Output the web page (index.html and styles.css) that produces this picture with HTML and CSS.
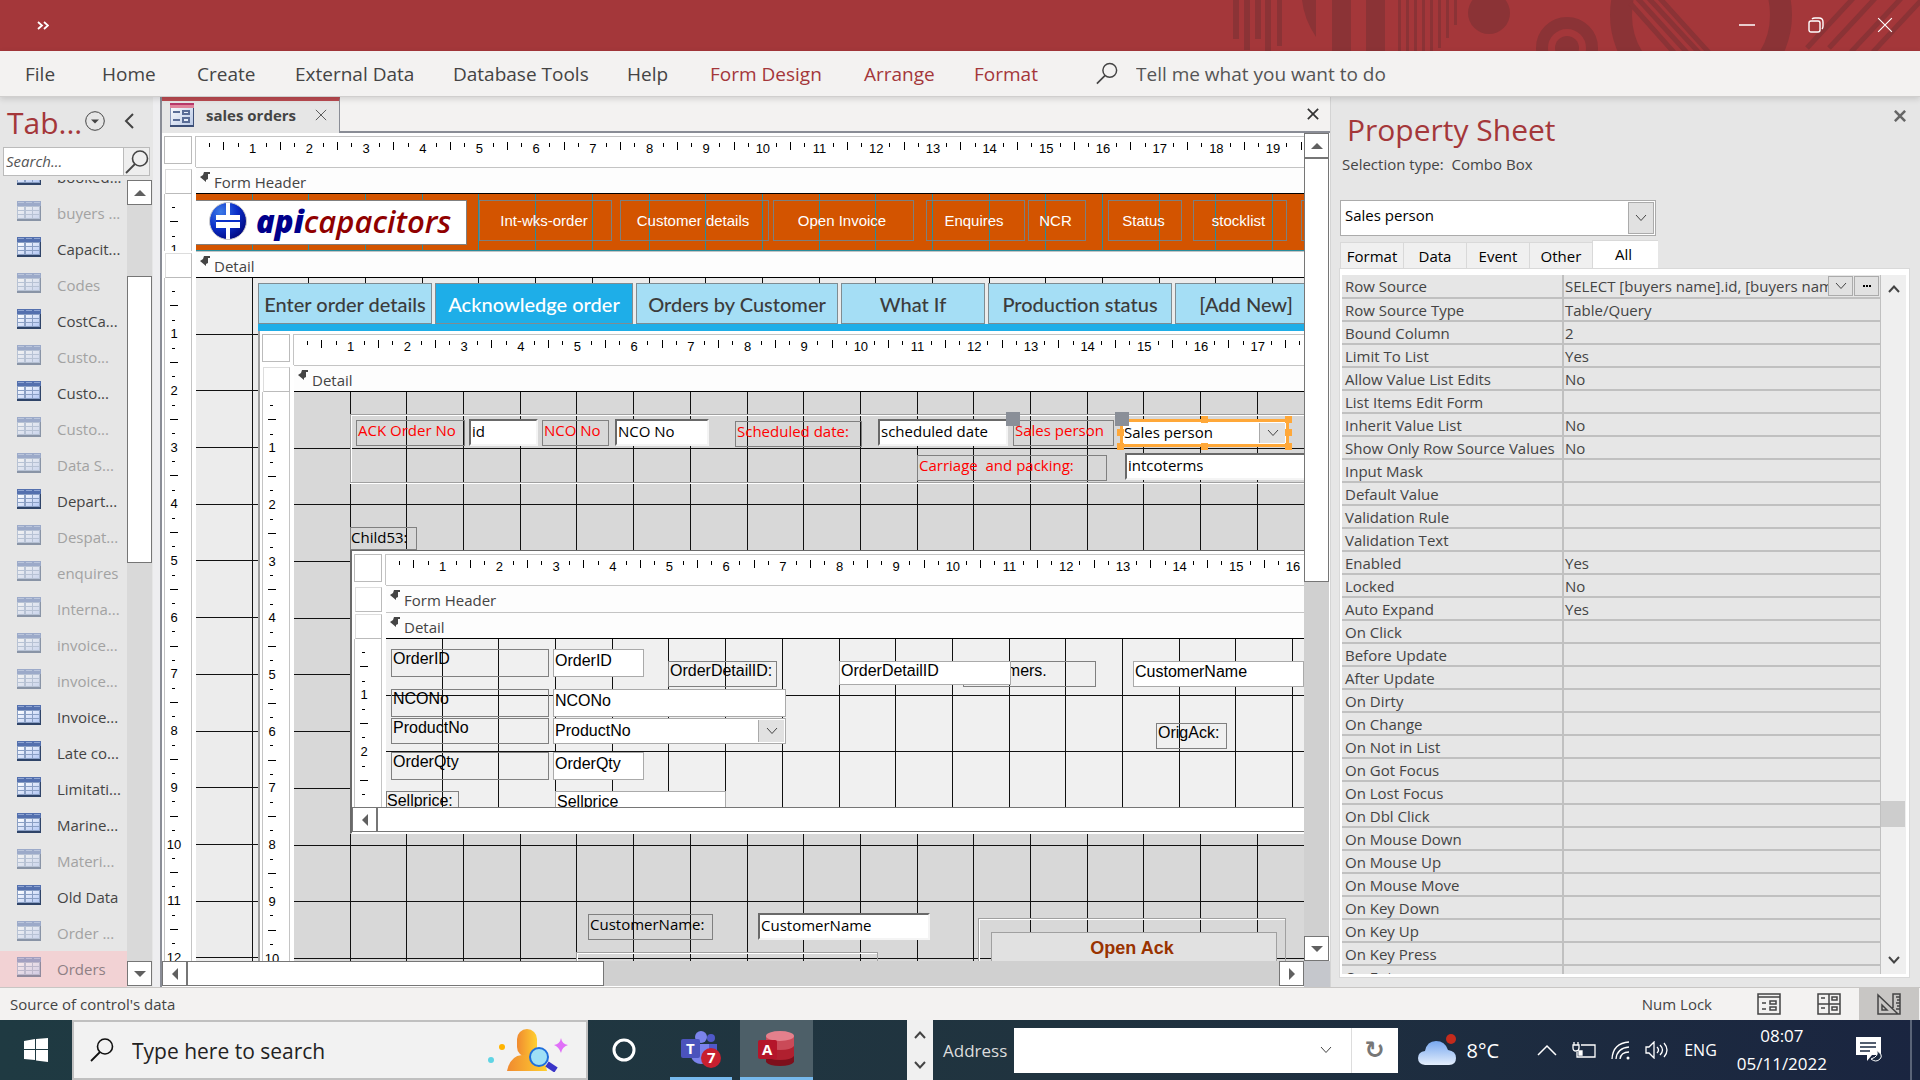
FILE: index.html
```html
<!DOCTYPE html>
<html lang="en">

<head>
    <meta charset="UTF-8">
    <meta name="viewport" content="width=device-width, initial-scale=1.0">
    <title>sales orders</title>
    <link rel="stylesheet" href="styles.css">
    <script src="script.js" defer></script>
</head>

<body>
    <!-- Shared icons -->
    <svg class="symbols" aria-hidden="true">
        <defs>
            <linearGradient id="cell" x1="0" y1="0" x2="1" y2="1">
                <stop offset="0" stop-color="#fff" />
                <stop offset="1" stop-color="#b4c8f4" />
            </linearGradient>
        </defs>
        <symbol id="i-table" viewBox="0 0 24 20">
            <path fill="#8a9fc4" d="M0 0h24v20H0z" />
            <path fill="#5470ae" d="M0 0h24v5H0z" />
            <path fill="#8fa5d2" d="M1 1h6v1H1zM9 1h6v1H9zM17 1h6v1h-6z" />
            <path fill="url(#cell)" d="M1 6h6v3H1zM9 6h6v3H9zM16 6h6v3h-6zM1 10h6v3H1zM9 10h6v3H9zM16 10h6v3h-6zM1 14h6v3H1zM9 14h6v3H9zM16 14h6v3h-6z" />
            <path fill="#2f4468" d="M0 18h24v2H0zM23 5h1v15h-1z" />
        </symbol>
        <symbol id="i-form" viewBox="0 0 24 24">
            <defs>
                <linearGradient id="sheen" x1="0" y1="0" x2="1" y2="1">
                    <stop offset="0" stop-color="#fff" />
                    <stop offset="1" stop-color="#b9c9e6" />
                </linearGradient>
            </defs>
            <path fill="url(#sheen)" stroke="#8b9abc" d="M.5.5h23v22H.5z" />
            <path fill="#b8386a" d="M0 0h24v2H0z" />
            <path fill="#e0849c" d="M0 2h24v3H0z" />
            <path fill="#5a6d96" d="M3 8h7v2H3zM3 16h7v2H3zM12 7h8v5h-8zM12 14h8v6h-8z" />
            <path fill="#e8eef8" d="M14 9h4v1h-4zM14 16h4v2h-4z" />
            <path fill="#3d5078" d="M0 22h24v2H0zM23 5h1v19h-1z" />
        </symbol>
        <symbol id="i-magnifier" viewBox="0 0 24 24">
            <circle cx="15" cy="8.500" r="7.500" fill="none" stroke="currentColor" stroke-width="1.600" />
            <path d="M10 14 1 23" fill="none" stroke="currentColor" stroke-width="1.800" />
        </symbol>
        <symbol id="i-down" viewBox="0 0 12 8">
            <path d="M1 1l5 5.500 5-5.500" fill="none" stroke="currentColor" />
        </symbol>
        <symbol id="i-cross" viewBox="0 0 14 14">
            <path d="M1 1l12 12M13 1 1 13" fill="none" stroke="currentColor" />
        </symbol>
        <symbol id="i-section" viewBox="0 0 10 10">
            <path fill="#444" d="M4 0h6v2H8v5L6 8v2L0 5l3-2z" />
        </symbol>
    </svg>

    <header class="titlebar">
        <button class="quick" aria-label="Customize Quick Access Toolbar">
            <svg width="12" height="9" viewBox="0 0 12 9"><path d="M1 1l4 3.500-4 3.500M7 1l4 3.500-4 3.500" fill="none" stroke="#fff" stroke-width="1.800" /></svg>
        </button>
        <svg class="pattern" width="690" height="51" viewBox="1230 0 690 51" aria-hidden="true">
            <g fill="#8b3336">
                <path d="M1233 0h6v39h-6zM1244 0h6v50h-6zM1255 0h6v39h-6zM1265 0h6v51h-6zM1277 0h5v46h-5zM1302 0h14v37q-12-18-14-37zM1332 0h19v51h-19zM1366 0h19v51h-19z" />
                <path d="M1398 0h3v51h-3zM1406 0h3v51h-3zM1414 0h3v51h-3zM1422 0h3v51h-3zM1430 0h3v51h-3zM1438 0h3v48h-3zM1446 0h3v38h-3zM1454 0h3v25h-3z" />
                <circle cx="1489" cy="13" r="21" />
                <circle cx="1567" cy="48" r="12" />
            </g>
            <g fill="none" stroke="#8b3336">
                <circle cx="1567" cy="48" r="25" stroke-width="12" />
                <circle cx="1701" cy="15" r="80" stroke-width="22" />
                <path stroke-width="5" d="M1630 3l48 54M1630-10l60 66M1630-22l72 78M1636-28l76 84M1807 48l52-56M1829 48l52-56M1851 52l56-60M1873 52l56-60" />
            </g>
        </svg>
        <div class="window-buttons">
            <button aria-label="Minimize"><svg width="16" height="16"><path d="M0 8h16" stroke="#fff" stroke-width="1.500" /></svg></button>
            <button aria-label="Restore"><svg width="16" height="16" fill="none" stroke="#fff" stroke-width="1.400"><rect x="1" y="4" width="11" height="11" rx="2" /><path d="M4 2q1-1 3-1h4q4 0 4 4v4q0 2-1 3" /></svg></button>
            <button aria-label="Close"><svg class="cross-lg"><use href="#i-cross" /></svg></button>
        </div>
    </header>

    <nav class="ribbon">
        <a href="#" class="r-file">File</a>
        <a href="#" class="r-home">Home</a>
        <a href="#" class="r-create">Create</a>
        <a href="#" class="r-external">External Data</a>
        <a href="#" class="r-tools">Database Tools</a>
        <a href="#" class="r-help">Help</a>
        <a href="#" class="r-design context">Form Design</a>
        <a href="#" class="r-arrange context">Arrange</a>
        <a href="#" class="r-format context">Format</a>
        <svg class="tell-icon"><use href="#i-magnifier" /></svg>
        <input class="tell" type="text" placeholder="Tell me what you want to do" aria-label="Tell me what you want to do">
    </nav>

    <main class="workspace">
        <aside class="nav-pane">
            <div class="nav-head">
                <h2>Tab...</h2>
                <button aria-label="Choose category"><svg width="20" height="20" viewBox="0 0 20 20"><circle cx="10" cy="10" r="9.300" fill="none" stroke="#444" /><path fill="#444" d="M6 8.500h8l-4 4z" /></svg></button>
                <button aria-label="Hide pane"><svg width="10" height="16" viewBox="0 0 10 16"><path d="M9 1 2 8l7 7" fill="none" stroke="#444" stroke-width="2" /></svg></button>
            </div>
            <div class="nav-search">
                <input type="text" placeholder="Search..." aria-label="Search">
                <button aria-label="Search"><svg class="mag-md"><use href="#i-magnifier" /></svg></button>
            </div>
            <div class="nav-body">
                <ul class="nav-list">
                    <li><a href="#"><svg><use href="#i-table" /></svg>booked...</a></li>
                    <li class="dim"><a href="#"><svg><use href="#i-table" /></svg>buyers ...</a></li>
                    <li><a href="#"><svg><use href="#i-table" /></svg>Capacit...</a></li>
                    <li class="dim"><a href="#"><svg><use href="#i-table" /></svg>Codes</a></li>
                    <li><a href="#"><svg><use href="#i-table" /></svg>CostCa...</a></li>
                    <li class="dim"><a href="#"><svg><use href="#i-table" /></svg>Custo...</a></li>
                    <li><a href="#"><svg><use href="#i-table" /></svg>Custo...</a></li>
                    <li class="dim"><a href="#"><svg><use href="#i-table" /></svg>Custo...</a></li>
                    <li class="dim"><a href="#"><svg><use href="#i-table" /></svg>Data S...</a></li>
                    <li><a href="#"><svg><use href="#i-table" /></svg>Depart...</a></li>
                    <li class="dim"><a href="#"><svg><use href="#i-table" /></svg>Despat...</a></li>
                    <li class="dim"><a href="#"><svg><use href="#i-table" /></svg>enquires</a></li>
                    <li class="dim"><a href="#"><svg><use href="#i-table" /></svg>Interna...</a></li>
                    <li class="dim"><a href="#"><svg><use href="#i-table" /></svg>invoice...</a></li>
                    <li class="dim"><a href="#"><svg><use href="#i-table" /></svg>invoice...</a></li>
                    <li><a href="#"><svg><use href="#i-table" /></svg>Invoice...</a></li>
                    <li><a href="#"><svg><use href="#i-table" /></svg>Late co...</a></li>
                    <li><a href="#"><svg><use href="#i-table" /></svg>Limitati...</a></li>
                    <li><a href="#"><svg><use href="#i-table" /></svg>Marine...</a></li>
                    <li class="dim"><a href="#"><svg><use href="#i-table" /></svg>Materi...</a></li>
                    <li><a href="#"><svg><use href="#i-table" /></svg>Old Data</a></li>
                    <li class="dim"><a href="#"><svg><use href="#i-table" /></svg>Order ...</a></li>
                    <li class="dim selected"><a href="#"><svg><use href="#i-table" /></svg>Orders</a></li>
                </ul>
                <div class="scroll-v nav-scroll">
                    <button class="up" aria-label="Scroll up"></button>
                    <div class="thumb"></div>
                    <button class="down" aria-label="Scroll down"></button>
                </div>
            </div>
        </aside>

        <section class="document">
            <div class="doc-tabs">
                <div class="doc-tab">
                    <svg class="form-icon"><use href="#i-form" /></svg>
                    <span>sales orders</span>
                    <button aria-label="Close tab"><svg class="cross-sm"><use href="#i-cross" /></svg></button>
                </div>
                <button class="doc-close" aria-label="Close"><svg class="cross-bold"><use href="#i-cross" /></svg></button>
            </div>
            <div class="doc-body">
                <div class="designer outer">
                    <div class="corner"></div>
                    <div class="ruler-h" data-count="19"></div>

                    <div class="selector"></div>
                    <div class="bar"><svg><use href="#i-section" /></svg>Form Header</div>
                    <div class="ruler-v header-ruler" data-count="1"></div>
                    <div class="canvas header-canvas">
                        <div class="logo">
                            <svg width="40" height="38" viewBox="0 0 40 38" aria-hidden="true">
                                <defs><radialGradient id="ball" cx=".3" cy=".25" r=".9"><stop offset="0" stop-color="#3d7be8" /><stop offset=".5" stop-color="#0a2ec8" /><stop offset="1" stop-color="#00006e" /></radialGradient></defs>
                                <circle cx="20" cy="19" r="18.500" fill="url(#ball)" stroke="#ccc" />
                                <path fill="#fff" d="M18 1h4v12h10v6H8v-6h10zM8 20h24v6H22v11h-4V26H8z" />
                                <path fill="#0a2ec8" d="M8 18h24v2H8z" />
                            </svg>
                            <span class="logo-api">api</span><span class="logo-cap">capacitors</span>
                        </div>
                        <button class="nav-btn b-int">Int-wks-order</button>
                        <button class="nav-btn b-cust">Customer details</button>
                        <button class="nav-btn b-inv">Open Invoice</button>
                        <button class="nav-btn b-enq">Enquires</button>
                        <button class="nav-btn b-ncr">NCR</button>
                        <button class="nav-btn b-status">Status</button>
                        <button class="nav-btn b-stock">stocklist</button>
                        <button class="nav-btn b-more" aria-label="More"></button>
                    </div>

                    <div class="selector"></div>
                    <div class="bar"><svg><use href="#i-section" /></svg>Detail</div>
                    <div class="ruler-v" data-count="12"></div>
                    <div class="canvas detail-canvas">
                        <div class="tab-control">
                            <div class="tabs">
                                <button class="t-enter">Enter order details</button>
                                <button class="t-ack active">Acknowledge order</button>
                                <button class="t-orders">Orders by Customer</button>
                                <button class="t-what">What If</button>
                                <button class="t-prod">Production status</button>
                                <button class="t-add">[Add New]</button>
                            </div>

                            <div class="designer ack-form">
                                <div class="corner"></div>
                                <div class="ruler-h" data-count="17"></div>
                                <div class="selector"></div>
                                <div class="bar"><svg><use href="#i-section" /></svg>Detail</div>
                                <div class="ruler-v" data-count="10"></div>
                                <div class="canvas ack-canvas">
                                    <div class="frame f-top"></div>
                                    <label class="ctl red l-ack" for="ack-id">ACK Order No</label>
                                    <input class="ctl sunken i-ack" id="ack-id" value="id">
                                    <label class="ctl red l-nco" for="nco">NCO No</label>
                                    <input class="ctl sunken i-nco" id="nco" value="NCO No">
                                    <label class="ctl red l-date" for="sched">Scheduled date:</label>
                                    <input class="ctl sunken i-date" id="sched" value="scheduled date">
                                    <label class="ctl red l-sales" for="sales">Sales person</label>
                                    <div class="selected-box">
                                        <select id="sales"><option>Sales person</option></select>
                                        <span class="drop"><svg><use href="#i-down" /></svg></span>
                                        <i class="h nw"></i><i class="h n"></i><i class="h ne"></i><i class="h w"></i><i class="h e"></i><i class="h sw"></i><i class="h s"></i><i class="h se"></i>
                                    </div>
                                    <i class="mover m-label"></i>
                                    <i class="mover m-combo"></i>
                                    <label class="ctl red l-carriage" for="terms">Carriage&nbsp; and packing:</label>
                                    <input class="ctl sunken i-terms" id="terms" value="intcoterms">
                                    <span class="ctl l-child">Child53:</span>

                                    <div class="designer order-form">
                                        <div class="corner"></div>
                                        <div class="ruler-h" data-count="16"></div>
                                        <div class="selector"></div>
                                        <div class="bar closed"><svg><use href="#i-section" /></svg>Form Header</div>
                                        <div class="selector"></div>
                                        <div class="bar"><svg><use href="#i-section" /></svg>Detail</div>
                                        <div class="ruler-v" data-count="2"></div>
                                        <div class="canvas order-canvas">
                                            <label class="ctl l-oid" for="oid">OrderID</label>
                                            <input class="ctl flat i-oid" id="oid" value="OrderID">
                                            <label class="ctl l-ncono" for="ncono">NCONo</label>
                                            <input class="ctl flat i-ncono" id="ncono" value="NCONo">
                                            <label class="ctl l-prod" for="prod">ProductNo</label>
                                            <div class="ctl combo i-prod">
                                                <select id="prod"><option>ProductNo</option></select>
                                                <span class="drop"><svg><use href="#i-down" /></svg></span>
                                            </div>
                                            <label class="ctl l-qty" for="qty">OrderQty</label>
                                            <input class="ctl flat i-qty" id="qty" value="OrderQty">
                                            <label class="ctl l-price" for="price">Sellprice:</label>
                                            <input class="ctl flat i-price" id="price" value="Sellprice">
                                            <label class="ctl l-odid" for="odid">OrderDetailID:</label>
                                            <span class="ctl l-customers">Customers.</span>
                                            <input class="ctl flat i-odid" id="odid" value="OrderDetailID">
                                            <input class="ctl flat i-cname" value="CustomerName" aria-label="CustomerName">
                                            <span class="ctl l-orig">OrigAck:</span>
                                        </div>
                                        <div class="scroll-h inner-scroll">
                                            <button class="left" aria-label="Scroll left"></button>
                                            <div class="thumb"></div>
                                        </div>
                                    </div>

                                    <label class="ctl l-cust" for="cust">CustomerName:</label>
                                    <input class="ctl sunken i-cust" id="cust" value="CustomerName">
                                    <div class="frame f-low"></div>
                                    <div class="frame f-open"></div>
                                    <button class="open-ack">Open Ack</button>
                                </div>
                            </div>
                        </div>
                    </div>
                </div>
                <div class="scroll-v doc-scroll-v">
                    <button class="up" aria-label="Scroll up"></button>
                    <div class="thumb"></div>
                    <button class="down" aria-label="Scroll down"></button>
                </div>
                <div class="scroll-h doc-scroll-h">
                    <button class="left" aria-label="Scroll left"></button>
                    <div class="thumb"></div>
                    <button class="right" aria-label="Scroll right"></button>
                </div>
                <div class="scroll-corner"></div>
            </div>
        </section>

        <aside class="sheet">
            <button class="sheet-close" aria-label="Close"><svg class="cross-bold"><use href="#i-cross" /></svg></button>
            <h2>Property Sheet</h2>
            <p class="sel-type">Selection type:&nbsp; Combo Box</p>
            <div class="sheet-combo">
                <select aria-label="Selected object"><option>Sales person</option></select>
                <span class="drop"><svg><use href="#i-down" /></svg></span>
            </div>
            <div class="sheet-tabs">
                <button>Format</button>
                <button>Data</button>
                <button>Event</button>
                <button>Other</button>
                <button class="active">All</button>
            </div>
            <div class="sheet-page">
                <div class="props-wrap">
                    <table class="props">
                        <tr><th scope="row">Row Source</th><td class="source"><div><span>SELECT [buyers name].id, [buyers name]</span><button aria-label="Open list"><svg><use href="#i-down" /></svg></button><button class="dots" aria-label="Build"><i></i><i></i><i></i></button></div></td></tr>
                        <tr><th scope="row">Row Source Type</th><td>Table/Query</td></tr>
                        <tr><th scope="row">Bound Column</th><td>2</td></tr>
                        <tr><th scope="row">Limit To List</th><td>Yes</td></tr>
                        <tr><th scope="row">Allow Value List Edits</th><td>No</td></tr>
                        <tr><th scope="row">List Items Edit Form</th><td></td></tr>
                        <tr><th scope="row">Inherit Value List</th><td>No</td></tr>
                        <tr><th scope="row">Show Only Row Source Values</th><td>No</td></tr>
                        <tr><th scope="row">Input Mask</th><td></td></tr>
                        <tr><th scope="row">Default Value</th><td></td></tr>
                        <tr><th scope="row">Validation Rule</th><td></td></tr>
                        <tr><th scope="row">Validation Text</th><td></td></tr>
                        <tr><th scope="row">Enabled</th><td>Yes</td></tr>
                        <tr><th scope="row">Locked</th><td>No</td></tr>
                        <tr><th scope="row">Auto Expand</th><td>Yes</td></tr>
                        <tr><th scope="row">On Click</th><td></td></tr>
                        <tr><th scope="row">Before Update</th><td></td></tr>
                        <tr><th scope="row">After Update</th><td></td></tr>
                        <tr><th scope="row">On Dirty</th><td></td></tr>
                        <tr><th scope="row">On Change</th><td></td></tr>
                        <tr><th scope="row">On Not in List</th><td></td></tr>
                        <tr><th scope="row">On Got Focus</th><td></td></tr>
                        <tr><th scope="row">On Lost Focus</th><td></td></tr>
                        <tr><th scope="row">On Dbl Click</th><td></td></tr>
                        <tr><th scope="row">On Mouse Down</th><td></td></tr>
                        <tr><th scope="row">On Mouse Up</th><td></td></tr>
                        <tr><th scope="row">On Mouse Move</th><td></td></tr>
                        <tr><th scope="row">On Key Down</th><td></td></tr>
                        <tr><th scope="row">On Key Up</th><td></td></tr>
                        <tr><th scope="row">On Key Press</th><td></td></tr>
                        <tr><th scope="row">On Enter</th><td></td></tr>
                    </table>
                </div>
                <div class="sheet-scroll">
                    <button aria-label="Scroll up"><svg class="flip"><use href="#i-down" /></svg></button>
                    <div class="thumb"></div>
                    <button aria-label="Scroll down"><svg><use href="#i-down" /></svg></button>
                </div>
            </div>
        </aside>
    </main>

    <footer class="statusbar">
        <span class="status-text">Source of control's data</span>
        <span class="num-lock">Num Lock</span>
        <button aria-label="Form View"><svg width="24" height="22" viewBox="0 0 24 22" fill="none" stroke="#444" stroke-width="1.500"><path d="M1 1h22v20H1zM1 4h22M5 10h4M5 16h4M13 8h6v3h-6zM13 14h6v3h-6z" /></svg></button>
        <button aria-label="Layout View"><svg width="24" height="22" viewBox="0 0 24 22" fill="none" stroke="#444" stroke-width="1.500"><path d="M1 1h22v20H1zM12 1v20M1 11h22M4 5h4M4 15h4M15 4h5v3h-5zM15 14h5v3h-5z" /></svg></button>
        <button class="active" aria-label="Design View"><svg width="24" height="22" viewBox="0 0 24 22" fill="none" stroke="#444" stroke-width="1.500"><path d="M1 2v19h20zM5 12v5h5zM16 15V1h7v20h-2M19 4h4M20 7h3M19 10h4M20 13h3M19 16h4" /></svg></button>
    </footer>

    <div class="taskbar">
        <button class="start" aria-label="Start"><svg width="24" height="24" viewBox="0 0 24 24"><path fill="#fff" d="M0 3l11-2v10H0zM12 1l12-1v11H12zM0 12h11v10L0 21zM12 12h12v12l-12-1.500z" /></svg></button>
        <div class="task-search">
            <svg class="mag-lg"><use href="#i-magnifier" /></svg>
            <input type="text" placeholder="Type here to search" aria-label="Type here to search">
            <svg width="80" height="43" viewBox="0 0 80 43" aria-hidden="true">
                <defs><linearGradient id="man" x1="0" x2="1"><stop offset="0" stop-color="#f08a30" /><stop offset="1" stop-color="#ffd030" /></linearGradient></defs>
                <rect x="29" y="0" width="20" height="28" rx="10" fill="url(#man)" />
                <path d="M19 42q3-15 15-16h10q13 1 15 16z" fill="url(#man)" />
                <circle cx="14" cy="18" r="3" fill="#ffb400" /><circle cx="3" cy="31" r="3" fill="#5fd4e4" />
                <path d="M59 35l9 6" stroke="#3a35c8" stroke-width="6" />
                <circle cx="51" cy="28" r="9" fill="#9fe0f6" stroke="#1f6fdc" stroke-width="2" />
                <path d="M73 9q1 6 7 7-6 2-7 8-2-6-7-8 6-1 7-7z" fill="#e070f8" />
            </svg>
        </div>
        <button class="cortana" aria-label="Cortana"><svg width="24" height="24"><circle cx="12" cy="12" r="10" fill="none" stroke="#fff" stroke-width="3" /></svg></button>
        <button class="app teams" aria-label="Teams">
            <svg width="40" height="38" viewBox="0 0 40 38">
                <circle cx="20" cy="7" r="6" fill="#7b83eb" /><circle cx="30" cy="8" r="4" fill="#5059c9" />
                <path fill="#5059c9" d="M24 14h12v9q-1 6-7 6h-5z" /><path fill="#7b83eb" d="M10 14h18v13q-1 7-8 7t-10-7z" />
                <rect y="9" width="19" height="19" rx="2" fill="#4b53bc" /><text x="5" y="24" class="glyph">T</text>
                <circle cx="30" cy="28" r="10" fill="#c8202f" /><text x="26" y="33" class="glyph">7</text>
            </svg>
        </button>
        <button class="app access" aria-label="Access">
            <svg width="38" height="36" viewBox="0 0 38 36">
                <path fill="#7d0f1c" d="M8 25h28v6q-3 4-14 4T8 31z" /><path fill="#b0202f" d="M8 15h28v10q-3 4-14 4T8 25z" /><path fill="#ca4a58" d="M8 5h28v10q-3 4-14 4T8 15z" />
                <ellipse cx="22" cy="5" rx="14" ry="5" fill="#e4808c" />
                <rect y="9" width="19" height="19" rx="2" fill="#b5152a" /><text x="4" y="24" class="glyph">A</text>
            </svg>
        </button>
        <div class="task-scroll">
            <button aria-label="Previous"><svg class="flip"><use href="#i-down" /></svg></button>
            <button aria-label="Next"><svg><use href="#i-down" /></svg></button>
        </div>
        <label class="address-label" for="address">Address</label>
        <div class="address">
            <input id="address" type="text">
            <button class="address-drop" aria-label="Open"><svg><use href="#i-down" /></svg></button>
            <button class="refresh" aria-label="Refresh">↻</button>
        </div>
        <button class="weather">
            <svg width="38" height="32" viewBox="0 0 38 32">
                <defs><linearGradient id="cloud" x1="0" y1="0" x2="0" y2="1"><stop offset="0" stop-color="#78a8f0" /><stop offset="1" stop-color="#e4eefc" /></linearGradient></defs>
                <path fill="url(#cloud)" d="M7 31q-7-1-7-7t7-7Q9 7 18 7t12 9q8 1 8 8t-7 7z" />
                <circle cx="33" cy="5" r="5" fill="#c42b1c" />
            </svg>
            8°C
        </button>
        <div class="tray">
            <svg width="20" height="12" viewBox="0 0 20 12"><path d="M1 11l9-9 9 9" fill="none" stroke="#fff" stroke-width="1.500" /></svg>
            <svg width="24" height="18" viewBox="0 0 24 18" fill="none" stroke="#fff" stroke-width="1.300"><path d="M9 4h14v12H5v-5M1 4h6v3q0 3-3 3T1 7zM2 4V1M6 4V1" /><path fill="#fff" d="M7 10h3v4H7z" /></svg>
            <svg width="19" height="19" viewBox="0 0 19 19" fill="none" stroke="#fff" stroke-width="1.300"><path d="M1 18Q2 2 18 1M5 18Q6 7 18 6M9 18q1-7 9-7" /><circle cx="17" cy="17" r="1.500" fill="#fff" stroke="none" /></svg>
            <svg width="24" height="18" viewBox="0 0 24 18" fill="none" stroke="#fff" stroke-width="1.300"><path d="M1 6h3l5-5v16l-5-5H1zM12 6q3 3 0 6M15 4q5 5 0 10M19 2q6 7 0 14" /></svg>
            <span>ENG</span>
        </div>
        <div class="clock"><span>08:07</span><span>05/11/2022</span></div>
        <button class="notify" aria-label="Notifications">
            <svg width="26" height="26" viewBox="0 0 26 26"><path fill="#fff" d="M0 0h25v18h-9l-5 6v-6H0z" /><path d="M4 6h16M4 10h16M4 14h10" stroke="#1b2a40" stroke-width="1.500" /><path d="M20 13q4 6-5 9 5 4 9 0t-4-9z" fill="#1b2a40" stroke="#fff" /></svg>
        </button>
    </div>
</body>

</html>
```

FILE: styles.css
```css
:root {
    /* one form centimetre at 150% display scaling */
    --unit: 1.5cm;
    --line: #111;
}

* {
    box-sizing: border-box;
}

body {
    margin: 0;
    height: 100vh;
    display: flex;
    flex-direction: column;
    overflow: hidden;
    font-family: "Open Sans", "Noto Sans", sans-serif;
    font-size: 15px;
    color: #444;
    background: #e6e6e6;
}

button,
input,
select {
    font: inherit;
    color: inherit;
    margin: 0;
    padding: 0;
    border: 0;
    border-radius: 0;
    background: none;
    appearance: none;
    outline: none;
}

h2,
p,
ul {
    margin: 0;
    padding: 0;
    font-weight: normal;
    list-style: none;
}

a {
    color: inherit;
    text-decoration: none;
}

svg {
    display: block;
    flex: none;
}

button {
    display: flex;
    align-items: center;
    justify-content: center;
}

.symbols {
    position: absolute;
    width: 0;
    height: 0;
}

.cross-lg {
    width: 16px;
    height: 16px;
}

.cross-sm {
    width: 12px;
    height: 12px;
}

.cross-bold {
    width: 12px;
    height: 12px;
    stroke-width: 2px;
}

/* Title bar */
.titlebar {
    position: relative;
    flex: none;
    height: 51px;
    display: flex;
    justify-content: space-between;
    background: #a4373a;
    color: #fff;
}

.quick {
    width: 86px;
}

.pattern {
    position: absolute;
    top: 0;
    right: 0;
}

.window-buttons {
    position: relative;
    display: flex;
    padding-right: 1px;
}

.window-buttons button {
    width: 69px;
    height: 50px;
}

/* Ribbon */
.ribbon {
    flex: none;
    position: relative;
    z-index: 1;
    height: 46px;
    display: flex;
    align-items: center;
    padding-left: 25px;
    background: #f3f2f1;
    border-bottom: 1px solid #d0cfce;
    box-shadow: 0 2px 6px rgba(0, 0, 0, 0.14);
    font-size: 19px;
}

.r-file { width: 77px; }
.r-home { width: 95px; }
.r-create { width: 98px; }
.r-external { width: 158px; }
.r-tools { width: 174px; }
.r-help { width: 83px; }
.r-design { width: 154px; }
.r-arrange { width: 110px; }
.r-format { width: 122px; }

.context {
    color: #a4373a;
}

.tell-icon {
    width: 22px;
    height: 23px;
}

.tell {
    flex: 1;
    margin-left: 18px;
}

input::placeholder {
    color: #555;
    opacity: 1;
}

/* Workspace */
.workspace {
    flex: 1;
    min-height: 0;
    display: grid;
    grid-template-columns: 160px 1fr 590px;
    border-bottom: 1px solid #c8c6c4;
}

.nav-pane {
    display: flex;
    flex-direction: column;
    min-height: 0;
    border-right: 7px solid #eeeef0;
}

.nav-head {
    display: flex;
    align-items: center;
    height: 50px;
    padding-left: 7px;
}

.nav-head h2 {
    width: 78px;
    font-size: 30px;
    color: #a4373a;
}

.nav-head button {
    width: 20px;
    margin-right: 19px;
    height: 50px;
    padding-bottom: 3px;
}

.nav-head button:last-child {
    width: 10px;
    margin-right: 0;
}

.nav-search {
    flex: none;
    display: flex;
    height: 29px;
    margin: 0 3px;
    border: 1px solid #bbb;
}

.nav-search input {
    flex: 1;
    min-width: 0;
    padding: 0 0 2px 2px;
    background: #fff;
    font-style: italic;
}

.nav-search button {
    width: 26px;
    border-left: 1px solid #bbb;
    background: #eee;
}

.mag-md {
    width: 24px;
    height: 24px;
}

.nav-body {
    flex: 1;
    min-height: 0;
    display: flex;
    padding-top: 4px;
}

.nav-list {
    flex: 1;
    overflow: hidden;
}

.nav-list li:first-child {
    margin-top: -21px;
}

.nav-list a {
    display: flex;
    align-items: center;
    height: 36px;
    padding-left: 17px;
    white-space: nowrap;
}

.nav-list svg {
    width: 24px;
    height: 20px;
    margin: 0 16px 4px 0;
}

.nav-list .dim {
    color: #a2a2a2;
}

.nav-list .dim svg {
    opacity: 0.5;
}

.nav-list .selected {
    background: #f2d2d4;
    color: #8e8084;
}

/* Scroll bars */
.scroll-v {
    display: flex;
    flex-direction: column;
    width: 25px;
    background: #d0d0d0;
}

.scroll-h {
    display: flex;
    height: 25px;
    background: #d0d0d0;
}

.scroll-v button,
.scroll-h button {
    flex: none;
    width: 25px;
    height: 25px;
    background: #fff;
    border: 1px solid #767676;
}

.scroll-v .down {
    margin-top: auto;
}

.scroll-h .right {
    margin-left: auto;
}

.scroll-v button::before,
.scroll-h button::before {
    content: "";
    border: 6px solid transparent;
}

.scroll-v .up::before {
    border-width: 0 6px 6px;
    border-bottom-color: #606060;
}

.scroll-v .down::before {
    border-width: 6px 6px 0;
    border-top-color: #606060;
}

.scroll-h .left::before {
    border-width: 6px 6px 6px 0;
    border-right-color: #606060;
}

.scroll-h .right::before {
    border-width: 6px 0 6px 6px;
    border-left-color: #606060;
}

.scroll-v .thumb,
.scroll-h .thumb {
    background: #fff;
    border: 1px solid #767676;
}

.nav-scroll {
    margin: 0 1px 1px 0;
    background: #d9d9d9;
}

.nav-scroll .thumb {
    margin-top: 71px;
    height: 287px;
}

/* Document */
.document {
    min-width: 0;
    min-height: 0;
    display: flex;
    flex-direction: column;
    border-left: 2px solid #8a8d96;
    background: #fff;
}

.doc-tabs {
    flex: none;
    display: flex;
    justify-content: space-between;
    height: 36px;
    background: #f3f2f1;
    border-bottom: 2px solid #8a8d96;
}

.doc-tab {
    display: flex;
    align-items: center;
    width: 178px;
    height: 36px;
    padding: 0 12px 4px 8px;
    border-top: 4px solid #bb4b51;
    border-right: 1px solid #8a8d96;
    background: #e6e6e6;
    font-weight: bold;
}

.doc-tab span {
    flex: 1;
    padding-left: 12px;
}

.form-icon {
    width: 24px;
    height: 24px;
}

.doc-close {
    width: 35px;
    color: #333;
}

.doc-body {
    flex: 1;
    min-height: 0;
    display: grid;
    grid-template-columns: 1fr 26px;
    grid-template-rows: minmax(0, 1fr) 26px;
}

.doc-scroll-v {
    width: 25px;
}

.doc-scroll-v .thumb {
    height: 424px;
}

.doc-scroll-h .thumb {
    width: 417px;
}

.scroll-corner {
    background: #c5c7cc;
}

/* Form designer: rulers, section bars and canvases */
.designer {
    display: grid;
    grid-template-columns: 34px minmax(0, 1fr);
    grid-template-rows: 34px;
    grid-auto-rows: 27px;
    min-width: 0;
    min-height: 0;
    overflow: hidden;
    background: #fff;
}

.outer {
    grid-template-rows: 34px 27px 57px 27px minmax(0, 1fr);
}

.corner {
    margin: 3px 4px 3px 2px;
    border: 1px solid #bbb;
}

.ruler-h {
    display: flex;
    overflow: hidden;
    margin: 3px 0 0 -1px;
    padding-left: calc(var(--unit) / 2);
    border: solid #c4c4c4;
    border-width: 1px 0 0 1px;
    font: 13px/20px "Liberation Sans", Arial, sans-serif;
    color: #000;
    background:
        repeating-linear-gradient(90deg, transparent 0 calc(var(--unit) * 0.5 - 1px), #000 0 calc(var(--unit) * 0.5), transparent 0 var(--unit)) 0 5px / 100% 8px no-repeat,
        repeating-linear-gradient(90deg, transparent 0 calc(var(--unit) * 0.25 - 1px), #000 0 calc(var(--unit) * 0.25), transparent 0 calc(var(--unit) * 0.5)) 0 6px / 100% 4px no-repeat;
}

.ruler-h span {
    flex: none;
    width: var(--unit);
    padding-top: 2px;
    text-align: center;
}

.ruler-v {
    overflow: hidden;
    margin-left: 2px;
    margin-right: 4px;
    padding-top: calc(var(--unit) / 2);
    border: solid #c4c4c4;
    border-width: 0 1px;
    font: 13px "Liberation Sans", Arial, sans-serif;
    color: #000;
    background:
        repeating-linear-gradient(transparent 0 calc(var(--unit) * 0.5 - 1px), #000 0 calc(var(--unit) * 0.5), transparent 0 var(--unit)) 5px 0 / 8px 100% no-repeat,
        repeating-linear-gradient(transparent 0 calc(var(--unit) * 0.25 - 1px), #000 0 calc(var(--unit) * 0.25), transparent 0 calc(var(--unit) * 0.5)) 7px 0 / 3px 100% no-repeat;
}

.ruler-v span {
    display: block;
    height: var(--unit);
    line-height: var(--unit);
    width: 18px;
    text-align: center;
}

.selector {
    margin: 2px 4px 0 3px;
    border: 1px solid #bbb;
    border-left-color: #ddd;
    border-top-color: #ddd;
}

.bar {
    display: flex;
    align-items: center;
    border-top: 1px solid #c4c4c4;
    border-bottom: 1px solid #000;
    padding: 2px 0 0 4px;
    background: #fdfdfd;
}

.bar.closed {
    border-bottom: 0;
}

.bar svg {
    width: 10px;
    height: 10px;
    margin: 0 4px 10px 0;
}

.canvas {
    position: relative;
    overflow: hidden;
    border-left: 0;
    background-image:
        repeating-linear-gradient(90deg, transparent 0 calc(var(--unit) - 1px), var(--line) 0 var(--unit)),
        repeating-linear-gradient(transparent 0 calc(var(--unit) - 1px), var(--line) 0 var(--unit));
}

.header-canvas {
    --line: #2a8c9c;
    background-color: #d35400;
}

.detail-canvas {
    background-color: #ececec;
}

.ack-canvas {
    background-color: #d8d8d8;
}

.order-canvas {
    background-color: #f0f0f0;
}

/* Orange header */
.logo {
    position: absolute;
    left: 0;
    top: 6px;
    width: 271px;
    height: 45px;
    display: flex;
    align-items: center;
    padding: 0 0 4px 12px;
    border: solid #808080;
    border-width: 1px 1px 1px 0;
    background: #fff;
    font: italic bold 31px/36px "Open Sans", sans-serif;
}

.logo svg {
    margin-right: 8px;
}

.logo-api {
    color: #00008b;
    font-weight: 800;
}

.logo-cap {
    color: #900000;
    font-weight: 600;
}

.nav-btn {
    position: absolute;
    top: 6px;
    height: 41px;
    padding-right: 3px;
    border: 1px solid #7a8080;
    color: #fff;
    font: 15px "Liberation Sans", Arial, sans-serif;
    white-space: nowrap;
}

.b-int { left: 283px; width: 133px; }
.b-cust { left: 424px; width: 149px; }
.b-inv { left: 577px; width: 141px; }
.b-enq { left: 730px; width: 99px; }
.b-ncr { left: 832px; width: 58px; }
.b-status { left: 912px; width: 74px; }
.b-stock { left: 997px; width: 94px; }
.b-more { left: 1105px; width: 94px; }

/* Tab control */
.tab-control {
    position: absolute;
    left: 62px;
    right: 0;
    top: 5px;
    bottom: 0;
    display: flex;
    flex-direction: column;
    overflow: hidden;
    background: #ececec;
}

.tabs {
    flex: none;
    display: flex;
    gap: 3px;
    height: 48px;
    border-bottom: 7px solid #1eaee8;
}

.tabs button {
    flex: none;
    border: 1px solid #7f8c92;
    background: #a5def5;
    font: 500 20px Lato, sans-serif;
    color: #3c3c3c;
}

.tabs .active {
    background: #1eaee8;
    color: #fff;
}

.t-enter { width: 174px; }
.t-ack { width: 198px; }
.t-orders { width: 202px; }
.t-what { width: 144px; }
.t-prod { width: 184px; }
.t-add { width: 142px; }

.ack-form {
    flex: 1;
    grid-template-rows: 34px 27px minmax(0, 1fr);
    border-left: 2px solid #a0a0a0;
}

/* Controls on the canvases */
.ctl {
    position: absolute;
    height: 26px;
    padding: 0 1px;
    border: 1px solid #808080;
    line-height: 18px;
    color: #000;
    white-space: nowrap;
    overflow: hidden;
}

.red {
    color: #f00;
}

.sunken {
    height: 27px;
    padding: 0 0 3px 1px;
    background: #fff;
    border: 2px solid;
    border-color: #696969 #f4f4f4 #f4f4f4 #696969;
}

.flat,
.combo {
    background: #fff;
    border-color: #aaa;
}

.flat {
    padding: 0 1px 4px;
}

.order-canvas .ctl {
    font-family: "Liberation Sans", Arial, sans-serif;
    font-size: 16px;
}

.frame {
    position: absolute;
    border: 1px solid #a0a0a0;
    box-shadow: inset 1px 1px #fff, 0 1px #fff;
}

.drop {
    position: absolute;
    top: 1px;
    right: 1px;
    bottom: 1px;
    width: 26px;
    display: flex;
    align-items: center;
    justify-content: center;
    border-left: 1px solid #aaa;
    background: #e1e1e1;
    color: #444;
    pointer-events: none;
}

.drop svg {
    width: 12px;
    height: 8px;
}

select {
    display: block;
    width: 100%;
    height: 100%;
}

.f-top { left: 56px; top: 22px; right: -10px; height: 69px; }
.l-ack { left: 62px; top: 28px; width: 109px; }
.i-ack { left: 175px; top: 27px; width: 69px; }
.l-nco { left: 248px; top: 28px; width: 67px; }
.i-nco { left: 321px; top: 27px; width: 94px; }
.l-date { left: 441px; top: 29px; width: 127px; }
.i-date { left: 584px; top: 27px; width: 130px; }
.l-sales { left: 719px; top: 28px; width: 101px; }
.l-carriage { left: 623px; top: 63px; width: 190px; }
.i-terms { left: 831px; top: 61px; width: 240px; }
.l-child { left: 56px; top: 135px; width: 67px; height: 23px; padding: 0; }
.l-cust { left: 294px; top: 522px; width: 125px; }
.i-cust { left: 464px; top: 521px; width: 172px; }
.f-low { left: 282px; top: 560px; width: 302px; height: 80px; }
.f-open { left: 684px; top: 526px; width: 308px; height: 120px; }

.open-ack {
    position: absolute;
    left: 697px;
    top: 540px;
    width: 286px;
    height: 50px;
    align-items: flex-start;
    padding: 5px 4px 0 0;
    border: 1px solid #a0a0a0;
    background: #e1e1e1;
    font: bold 18px "Liberation Sans", Arial, sans-serif;
    color: #993300;
}

.selected-box {
    position: absolute;
    left: 826px;
    top: 27px;
    width: 169px;
    height: 28px;
    border: 3px solid #ffa839;
    background: #fff;
    color: #000;
}

.selected-box select {
    padding: 0 0 3px 1px;
}

.h {
    position: absolute;
    width: 7px;
    height: 7px;
    background: #ffa839;
}

.nw, .w, .sw { left: -6px; }
.n, .s { left: calc(50% - 4px); }
.ne, .e, .se { right: -6px; }
.nw, .n, .ne { top: -6px; }
.w, .e { top: 7px; }
.sw, .s, .se { bottom: -6px; }

.mover {
    position: absolute;
    top: 20px;
    width: 14px;
    height: 14px;
    background: #8a8f98;
}

.m-label { left: 712px; }
.m-combo { left: 821px; }

/* Order details subform */
.order-form {
    position: absolute;
    left: 56px;
    right: 0;
    top: 158px;
    height: 284px;
    grid-template-rows: 34px 27px 27px minmax(0, 1fr) 26px;
    border-left: 2px solid #696969;
    border-top: 1px solid #696969;
    border-bottom: 1px solid #fff;
}

.inner-scroll {
    grid-column: 1 / 3;
}

.inner-scroll .thumb {
    flex: 1;
    border-right: 0;
}

.l-oid, .l-ncono, .l-prod, .l-qty { left: 5px; width: 158px; height: 28px; }
.i-oid, .i-qty { left: 167px; width: 91px; height: 28px; }
.i-ncono, .i-prod { left: 167px; width: 233px; height: 28px; }
.l-oid, .i-oid { top: 10px; }
.l-ncono, .i-ncono { top: 50px; }
.l-prod, .i-prod { top: 79px; height: 26px; }
.l-qty, .i-qty { top: 113px; }
.l-price { left: 0; top: 152px; width: 73px; padding: 0; }
.i-price { left: 169px; top: 152px; width: 171px; }
.l-odid { left: 282px; top: 22px; width: 109px; }
.i-odid { left: 453px; top: 22px; width: 172px; height: 24px; }
.l-customers { left: 577px; top: 22px; width: 133px; }
.i-cname { left: 747px; top: 22px; width: 171px; }
.l-orig { left: 770px; top: 84px; width: 71px; }

/* Property sheet */
.sheet {
    position: relative;
    display: flex;
    flex-direction: column;
    min-height: 0;
    padding: 8px 10px 9px 8px;
    border-left: 1px solid #d4d4d4;
}

.sheet-close {
    position: absolute;
    top: 13px;
    right: 14px;
    color: #666;
}

.sheet-close svg {
    stroke-width: 3px;
}

.sheet h2 {
    height: 48px;
    padding-left: 8px;
    font-size: 30px;
    line-height: 49px;
    color: #a4373a;
}

.sel-type {
    padding-left: 3px;
    height: 47px;
    line-height: 23px;
}

.sheet-combo {
    position: relative;
    flex: none;
    width: 316px;
    height: 36px;
    margin: 0 0 4px 1px;
    border: 1px solid #ababab;
    background: #fff;
    color: #000;
}

.sheet-combo select {
    padding: 0 0 6px 4px;
}

.sheet-combo .drop {
    border: 1px solid #ababab;
}

.sheet-tabs {
    display: flex;
    align-items: flex-end;
    margin-left: 1px;
    height: 28px;
    color: #000;
}

.sheet-tabs button {
    width: 63px;
    height: 26px;
    border: 1px solid #d9d9d9;
    border-width: 1px 0 0 1px;
    background: #f0f0f0;
}

.sheet-tabs .active {
    width: 66px;
    height: 28px;
    padding: 0 4px 2px 0;
    background: #fff;
}

.sheet-page {
    flex: 1;
    min-height: 0;
    display: flex;
    padding: 6px 3px 3px 2px;
    border: 1px solid #d9d9d9;
    background: #fff;
}

.props-wrap {
    flex: 1;
    overflow: hidden;
}

.props {
    width: 100%;
    border-collapse: collapse;
    table-layout: fixed;
    background: #e6e6e6;
}

.props th,
.props td {
    height: 23px;
    padding: 0 1px 0 3px;
    border-bottom: 2px solid #c0c0c0;
    font-weight: normal;
    text-align: left;
    line-height: 20px;
    white-space: nowrap;
}

.props th {
    width: 221px;
    border-right: 2px solid #c0c0c0;
}

.props td {
    padding: 0 0 0 1px;
    border-right: 1px solid #c0c0c0;
}

.source div {
    display: flex;
    height: 20px;
}

.source span {
    flex: 1;
    overflow: hidden;
}

.source button {
    flex: none;
    width: 25px;
    margin-right: 1px;
    border: 1px solid #ababab;
    background: #e1e1e1;
}

.source svg,
.sheet-scroll svg,
.task-scroll svg,
.address svg {
    width: 12px;
    height: 8px;
}

.dots {
    gap: 1px;
}

.dots i {
    width: 2px;
    height: 2px;
    background: #000;
}

.sheet-scroll {
    width: 25px;
    display: flex;
    flex-direction: column;
    background: #efefef;
}

.sheet-scroll button {
    width: 25px;
    height: 28px;
    stroke-width: 2px;
}

.sheet-scroll .thumb {
    height: 26px;
    margin: auto 1px 119px 0;
    background: #cdcdcd;
}

.flip {
    transform: rotate(180deg);
}

/* Status bar */
.statusbar {
    flex: none;
    display: flex;
    align-items: center;
    height: 32px;
    padding: 0 1px 0 10px;
    background: #f3f2f1;
}

.status-text {
    flex: 1;
}

.num-lock {
    padding-right: 27px;
}

.statusbar button {
    width: 60px;
    height: 32px;
}

.statusbar .active {
    background: #c8c6c4;
}

/* Windows taskbar */
.taskbar {
    flex: none;
    display: flex;
    align-items: center;
    height: 60px;
    padding-right: 8px;
    background: linear-gradient(90deg, #1f3a42, #20333f 55%, #1a2540);
    color: #fff;
}

.taskbar > button {
    height: 60px;
}

.start {
    width: 72px;
}

.task-search {
    display: flex;
    align-items: center;
    width: 516px;
    height: 60px;
    padding: 0 18px 0 16px;
    border: 2px solid #c0c0c0;
    background: #f2f2f2;
    color: #111;
}

.mag-lg {
    width: 24px;
    height: 24px;
}

.task-search input {
    flex: 1;
    margin: 2px 0 0 18px;
    font-size: 21px;
}

.task-search input::placeholder {
    color: #222;
}

.cortana {
    width: 72px;
}

.app {
    width: 62px;
    margin-left: 10px;
    border-bottom: 3px solid #76b9ed;
}

.access {
    width: 73px;
    margin: 0 94px 0 8px;
    background: #4d5f68;
}

.glyph {
    font: bold 15px "Open Sans", sans-serif;
    fill: #fff;
}

.task-scroll {
    width: 26px;
    height: 60px;
    background: #f0f0f0;
    color: #444;
}

.task-scroll button {
    width: 26px;
    height: 30px;
    stroke-width: 2px;
}

.address-label {
    padding: 0 7px 0 10px;
    font-size: 17px;
    color: #ddd;
}

.address {
    flex: 1;
    display: flex;
    height: 45px;
    margin-right: 20px;
    background: #fff;
    color: #444;
}

.address input {
    flex: 1;
    min-width: 0;
}

.address-drop {
    width: 50px;
}

.refresh {
    width: 47px;
    border-left: 1px solid #ddd;
    font: bold 24px "DejaVu Sans", sans-serif;
    color: #777;
}

.weather {
    gap: 11px;
    font-size: 20px;
}

.tray {
    display: flex;
    align-items: center;
    gap: 15px;
    margin-left: 38px;
    font-size: 16px;
}

.clock {
    display: flex;
    flex-direction: column;
    align-items: center;
    margin-left: 20px;
    font-size: 17px;
    line-height: 28px;
}

.notify {
    width: 85px;
    border-right: 2px solid #5a6478;
    padding-right: 28px;
    justify-content: flex-end;
}
```

FILE: script.js
```js
// Number the rulers: one label per form centimetre
document.querySelectorAll('.ruler-h, .ruler-v').forEach(ruler => {
    for (let i = 1; i <= Number(ruler.dataset.count); i++) {
        const mark = document.createElement('span');
        mark.textContent = i;
        ruler.appendChild(mark);
    }
});
```
